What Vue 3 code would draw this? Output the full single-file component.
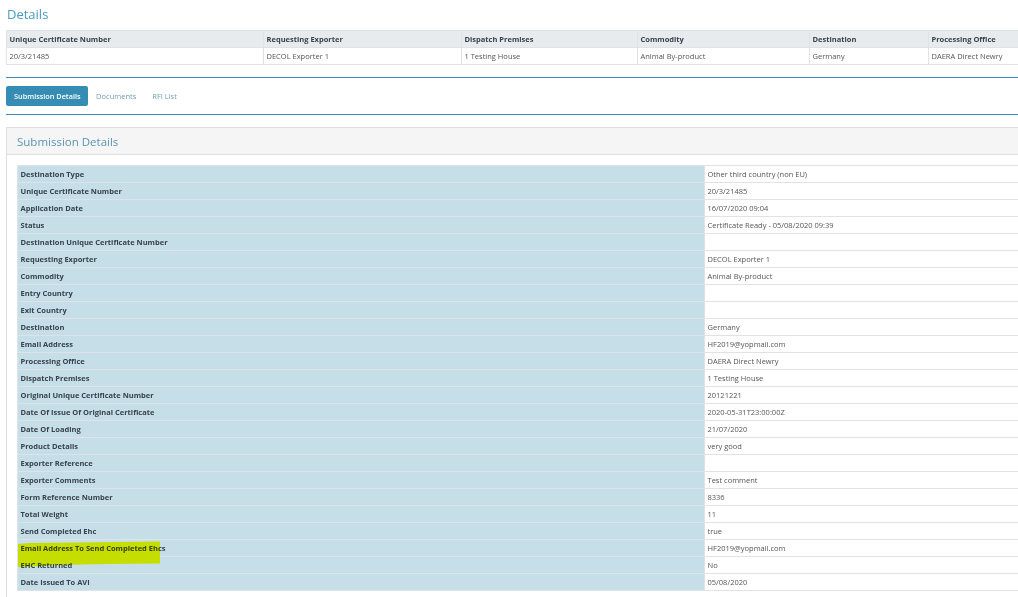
<template>
  <div class="page">
    <h2 class="page-title">Details</h2>

    <table class="grid summary">
      <thead>
        <tr>
          <th v-for="col in summaryCols" :key="col.name" :style="{ width: col.width + 'px' }">{{ col.name }}</th>
        </tr>
      </thead>
      <tbody>
        <tr>
          <td v-for="col in summaryCols" :key="col.name">{{ col.value }}</td>
        </tr>
      </tbody>
    </table>

    <div class="tabs">
      <a class="tab active">Submission Details</a>
      <a class="tab">Documents</a>
      <a class="tab">RFI List</a>
    </div>

    <section class="panel">
      <div class="panel-heading">Submission Details</div>
      <div class="panel-body">
        <table class="grid detail">
          <tbody>
            <tr v-for="row in rows" :key="row[0]">
              <th>{{ row[0] }}</th>
              <td>{{ row[1] }}</td>
            </tr>
          </tbody>
        </table>
        <svg class="marker" width="143" height="26" viewBox="0 0 143 26">
          <path d="M0 3 L12 2 L60 1.5 L142 0.5 L142 22.5 L90 23 L40 24 L0 26 Z" fill="#c9dd00" />
        </svg>
      </div>
    </section>
  </div>
</template>

<script setup>
const summaryCols = [
  { name: 'Unique Certificate Number', value: '20/3/21485', width: 257 },
  { name: 'Requesting Exporter', value: 'DECOL Exporter 1', width: 198 },
  { name: 'Dispatch Premises', value: '1 Testing House', width: 176 },
  { name: 'Commodity', value: 'Animal By-product', width: 172 },
  { name: 'Destination', value: 'Germany', width: 119 },
  { name: 'Processing Office', value: 'DAERA Direct Newry', width: 110 }
]

const rows = [
  ['Destination Type', 'Other third country (non EU)'],
  ['Unique Certificate Number', '20/3/21485'],
  ['Application Date', '16/07/2020 09:04'],
  ['Status', 'Certificate Ready - 05/08/2020 09:39'],
  ['Destination Unique Certificate Number', ''],
  ['Requesting Exporter', 'DECOL Exporter 1'],
  ['Commodity', 'Animal By-product'],
  ['Entry Country', ''],
  ['Exit Country', ''],
  ['Destination', 'Germany'],
  ['Email Address', 'HF2019@yopmail.com'],
  ['Processing Office', 'DAERA Direct Newry'],
  ['Dispatch Premises', '1 Testing House'],
  ['Original Unique Certificate Number', '20121221'],
  ['Date Of Issue Of Original Certificate', '2020-05-31T23:00:00Z'],
  ['Date Of Loading', '21/07/2020'],
  ['Product Details', 'very good'],
  ['Exporter Reference', ''],
  ['Exporter Comments', 'Test comment'],
  ['Form Reference Number', '8336'],
  ['Total Weight', '11'],
  ['Send Completed Ehc', 'true'],
  ['Email Address To Send Completed Ehcs', 'HF2019@yopmail.com'],
  ['EHC Returned', 'No'],
  ['Date Issued To AVI', '05/08/2020']
]
</script>

<style scoped>
.page {
  width: 1032px;
  height: 597px;
  padding: 6px 0 0 6px;
  box-sizing: border-box;
  overflow: hidden;
  background: #fff;
  font-family: "Open Sans", "Liberation Sans", sans-serif;
  font-size: 7.5px;
  color: #555;
}

.page-title {
  margin: 0 0 9px 1px;
  font-size: 13px;
  line-height: 16px;
  font-weight: 400;
  color: #4a9bbf;
}

.grid {
  border-collapse: collapse;
  table-layout: fixed;
}

.grid th,
.grid td {
  height: 17px;
  padding: 0 2.5px 1px;
  box-sizing: border-box;
  border: 1px solid #dfe2e6;
  text-align: left;
  line-height: 14px;
  white-space: nowrap;
  overflow: hidden;
}

.grid th {
  font-weight: 700;
  color: #38424c;
}

.summary {
  width: 1032px;
  margin-top: -1px;
}

.summary th {
  background: #e8ebee;
}

.tabs {
  display: flex;
  align-items: center;
  gap: 16px;
  height: 36px;
  margin-top: 12px;
  border-top: 1px solid #3a90b6;
  border-bottom: 1px solid #3a90b6;
  box-sizing: content-box;
}

.tab {
  line-height: 20px;
  color: #6e9fb8;
}

.tab.active {
  padding: 0 7.5px 0 8px;
  border-radius: 2px;
  background: #368db3;
  color: #fff;
  font-size: 7.3px;
  font-weight: 600;
  margin-right: -8px;
}

.panel {
  width: 1040px;
  margin-top: 12px;
  border: 1px solid #dedede;
}

.panel-heading {
  height: 26px;
  padding-left: 10px;
  border-bottom: 1px solid #dedede;
  background: #f5f5f5;
  font-size: 11.5px;
  line-height: 27px;
  color: #5a94b5;
}

.panel-body {
  position: relative;
  padding: 10px;
}

.detail {
  width: 1020px;
}

.detail th {
  width: 687px;
  background: #c6dee8;
}

.marker {
  position: absolute;
  left: 11px;
  top: 386px;
  mix-blend-mode: darken;
}
</style>

<style>
html,
body {
  overflow: hidden;
}
</style>
